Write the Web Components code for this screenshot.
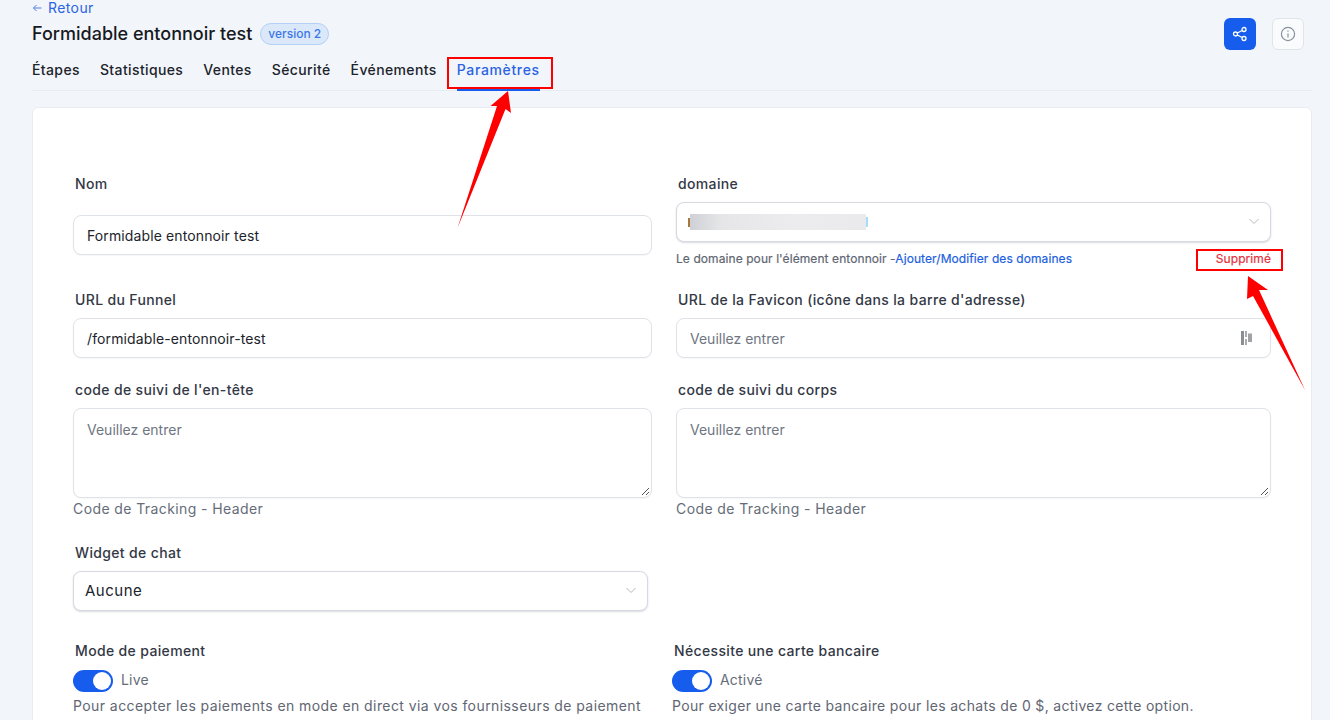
<!DOCTYPE html>
<html lang="fr">
<head>
<meta charset="utf-8">
<title>Paramètres</title>
<style>
  html, body { margin: 0; height: 720px; overflow: hidden; background: #f2f6fa; }
  body { font-family: Inter, "Liberation Sans", sans-serif; color: #1c1f26; }
</style>
</head>
<body>
<funnel-page>
  <funnel-header slot="header" title="Formidable entonnoir test" version="version 2"></funnel-header>
  <funnel-tabs slot="header" items="Étapes|Statistiques|Ventes|Sécurité|Événements|Paramètres" active="Paramètres"></funnel-tabs>
  <settings-card slot="body">
    <form-row height="116">
      <form-field label="Nom" gap="19"><text-box value="Formidable entonnoir test"></text-box></form-field>
      <form-field label="domaine">
        <select-box blurred></select-box>
        <div style="display:flex;justify-content:space-between;padding:8px 0 0 0;font:400 12px/17px Inter,sans-serif;letter-spacing:.08px;color:#5f6673;-webkit-text-stroke:.2px">
          <span>Le domaine pour l'élément entonnoir -<span style="color:#1d5fe0">Ajouter/Modifier des domaines</span></span>
          <span style="color:#e5313a">Supprimé</span>
        </div>
      </form-field>
    </form-row>
    <form-row height="90">
      <form-field label="URL du Funnel"><text-box value="/formidable-entonnoir-test"></text-box></form-field>
      <form-field label="URL de la Favicon (icône dans la barre d'adresse)"><text-box placeholder="Veuillez entrer" picker></text-box></form-field>
    </form-row>
    <form-row height="163">
      <form-field label="code de suivi de l'en-tête" hint="Code de Tracking - Header"><text-box placeholder="Veuillez entrer" multiline></text-box></form-field>
      <form-field label="code de suivi du corps" hint="Code de Tracking - Header"><text-box placeholder="Veuillez entrer" multiline></text-box></form-field>
    </form-row>
    <form-row height="98">
      <form-field label="Widget de chat" style="padding-right:4px"><select-box value="Aucune"></select-box></form-field>
      <div></div>
    </form-row>
    <form-row height="81">
      <form-field label="Mode de paiement" gap="7">
        <toggle-switch text="Live"></toggle-switch>
        <div style="margin-top:4px;font:400 14px/20px Inter,sans-serif;letter-spacing:.42px;color:#5f6673;white-space:nowrap">Pour accepter les paiements en mode en direct via vos fournisseurs de paiement</div>
      </form-field>
      <form-field label="Nécessite une carte bancaire" gap="7" style="margin-left:-4px">
        <toggle-switch text="Activé"></toggle-switch>
        <div style="margin-top:4px;font:400 14px/20px Inter,sans-serif;letter-spacing:.33px;color:#5f6673;white-space:nowrap">Pour exiger une carte bancaire pour les achats de 0 $, activez cette option.</div>
      </form-field>
    </form-row>
  </settings-card>
</funnel-page>
<red-marks></red-marks>

<script>
// small helper, every element gets an open root with its own style
function shadow(host, html) {
  host.attachShadow({ mode: 'open' }).innerHTML = html;
}

customElements.define('funnel-page', class extends HTMLElement {
  connectedCallback() {
    shadow(this, `<style>
      :host { display: block; padding: 0 18px 0 32px; height: 720px; overflow: hidden; box-sizing: border-box; }
      .body { margin-top: 16px; }
    </style>
    <slot name="header"></slot>
    <div class="body"><slot name="body"></slot></div>`);
  }
});

customElements.define('funnel-header', class extends HTMLElement {
  connectedCallback() {
    shadow(this, `<style>
      :host { display: block; padding-right: 8px; }
      .back { display: flex; align-items: center; gap: 6px; height: 16px; font-size: 14px; line-height: 16px; letter-spacing: .4px; color: #2b63e3; }
      .row { display: flex; align-items: center; height: 34px; margin-top: 1px; }
      h1 { margin: 0; font-size: 18px; line-height: 24px; font-weight: 500; color: #17191f; }
      .pill { margin-left: 8px; height: 20px; padding: 0 7px; border: 1px solid #b3d0f5; border-radius: 11px; background: #dbe8fa; color: #3b78e7; font-size: 12px; line-height: 20px; font-weight: 500; }
      .actions { margin-left: auto; display: flex; gap: 16px; }
      .btn { width: 32px; height: 32px; border-radius: 6px; box-sizing: border-box; display: flex; align-items: center; justify-content: center; }
      .share { background: #165dee; }
      .info { background: #f9fbfd; border: 1px solid #e1e5ea; }
    </style>
    <div class="back"><svg width="10" height="10" viewBox="0 0 10 10" fill="none" stroke="#4c7fe6" stroke-width="1"><path d="M9.5 5H1.5M4.5 2 1.5 5l3 3"/></svg>Retour</div>
    <div class="row">
      <h1>${this.getAttribute('title')}</h1>
      <span class="pill">${this.getAttribute('version')}</span>
      <div class="actions">
        <div class="btn share"><svg width="16" height="16" viewBox="0 0 16 16" fill="none" stroke="#fff" stroke-width="1.3"><circle cx="12" cy="3.5" r="2"/><circle cx="12" cy="12.5" r="2"/><circle cx="3.5" cy="8" r="2"/><path d="M5.3 7 10.2 4.5M5.3 9l4.9 2.5"/></svg></div>
        <div class="btn info"><svg width="16" height="16" viewBox="0 0 16 16" fill="none" stroke="#8a919c" stroke-width="1.2"><circle cx="8" cy="8" r="6.6"/><path d="M8 7.4V11.4M8 4.6V5.8"/></svg></div>
      </div>
    </div>`);
  }
});

customElements.define('funnel-tabs', class extends HTMLElement {
  connectedCallback() {
    const active = this.getAttribute('active');
    const tabs = this.getAttribute('items').split('|').map(t =>
      `<span class="tab${t === active ? ' on' : ''}">${t}</span>`).join('');
    shadow(this, `<style>
      :host { display: block; margin-top: 2px; border-bottom: 1px solid #e8ecf1; }
      .tabs { display: flex; gap: 20px; height: 37px; }
      .tab { font-size: 14px; font-weight: 500; line-height: 20px; padding-top: 7px; color: #20232b; box-sizing: border-box; letter-spacing: .38px; }
      .on { color: #2b63e3; border-bottom: 2px solid #165dee; margin-bottom: -1px; height: 38px; letter-spacing: .65px; }
    </style><div class="tabs">${tabs}</div>`);
  }
});

customElements.define('settings-card', class extends HTMLElement {
  connectedCallback() {
    shadow(this, `<style>
      :host { display: block; height: 700px; box-sizing: border-box; padding: 64px 40px 0; background: #fff; border: 1px solid #e8ecf1; border-radius: 6px; }
    </style><slot></slot>`);
  }
});

customElements.define('form-row', class extends HTMLElement {
  connectedCallback() {
    shadow(this, `<style>
      :host { display: grid; grid-template-columns: 579px 595px; column-gap: 24px; align-items: start; height: ${this.getAttribute('height')}px; }
    </style><slot></slot>`);
  }
});

customElements.define('form-field', class extends HTMLElement {
  connectedCallback() {
    const hint = this.getAttribute('hint');
    shadow(this, `<style>
      :host { display: block; }
      label { display: block; height: 24px; padding-left: 2px; margin-bottom: ${this.getAttribute('gap') || 6}px; font-size: 14px; line-height: 24px; font-weight: 500; letter-spacing: .35px; color: #333845; white-space: nowrap; }
      .hint { font-size: 14px; line-height: 22px; letter-spacing: .4px; color: #656c78; }
    </style>
    <label>${this.getAttribute('label')}</label>
    <slot></slot>
    ${hint ? `<div class="hint">${hint}</div>` : ''}`);
  }
});

customElements.define('text-box', class extends HTMLElement {
  connectedCallback() {
    const value = this.getAttribute('value');
    const multi = this.hasAttribute('multiline');
    const text = value || this.getAttribute('placeholder');
    shadow(this, `<style>
      :host { display: block; }
      .box { position: relative; box-sizing: border-box; height: ${multi ? 90 : 40}px; padding: ${multi ? 11 : 10}px 13px; border: 1px solid #dfe2e8; border-radius: 8px; background: #fff; font-size: 14px; line-height: 20px; letter-spacing: ${value ? '.12px' : '0'}; color: ${value ? '#20232b' : '#6f7682'}; box-shadow: 0 1px 1px rgba(30,40,60,.04); }
      svg { position: absolute; }
      .pick { right: 17px; top: 12px; }
      .grip { right: 1px; bottom: 1px; }
    </style>
    <div class="box">${text}
      ${this.hasAttribute('picker') ? '<svg class="pick" width="14" height="14" viewBox="0 0 14 14"><rect x="2" y="0" width="3" height="14" fill="#8b8e93"/><rect x="6" y="0" width="2" height="6" fill="#a9abaf"/><rect x="6" y="8" width="2" height="6" fill="#a9abaf"/><rect x="9" y="2.5" width="4" height="8.5" fill="#a0a2a6"/></svg>' : ''}
      ${multi ? '<svg class="grip" width="9" height="9" viewBox="0 0 9 9" stroke="#555" fill="none"><path d="M8 1 1 8M8 5 5 8"/></svg>' : ''}
    </div>`);
  }
});

customElements.define('select-box', class extends HTMLElement {
  connectedCallback() {
    shadow(this, `<style>
      :host { display: block; }
      .box { position: relative; box-sizing: border-box; height: 40px; padding: 9px 11px; border: 1px solid #d6d8e2; border-radius: 8px; background: #fff; font-size: 15px; line-height: 20px; letter-spacing: .5px; color: #20232b; box-shadow: 0 1px 2px rgba(30,40,70,.16); }
      svg { position: absolute; right: 11px; top: 15px; }
      .blur { position: absolute; left: 13px; top: 11px; width: 176px; height: 16px; background: linear-gradient(90deg, #cfd1d6, #e6e6e8 18%, #ececee 60%, #eaeaec); }
      .blur::before { content: ""; position: absolute; left: -2px; top: 4px; width: 2px; height: 9px; background: #a8763f; }
      .blur::after { content: ""; position: absolute; right: -2px; top: 3px; width: 2px; height: 10px; background: #a5dcf7; }
    </style>
    <div class="box">${this.getAttribute('value') || ''}
      ${this.hasAttribute('blurred') ? '<div class="blur"></div>' : ''}
      <svg width="10" height="7" viewBox="0 0 10 7" fill="none" stroke="#b4b8c0"><path d="M.5 1 5 5.5 9.5 1"/></svg>
    </div>`);
  }
});

customElements.define('toggle-switch', class extends HTMLElement {
  connectedCallback() {
    shadow(this, `<style>
      :host { display: flex; align-items: center; gap: 8px; height: 22px; font-size: 14px; letter-spacing: .2px; color: #656c78; }
      .track { position: relative; width: 40px; height: 22px; border-radius: 11px; background: #165dee; }
      .knob { position: absolute; right: 2px; top: 2px; width: 18px; height: 18px; border-radius: 50%; background: #fff; }
      .txt { margin-top: -4px; }
    </style>
    <span class="track"><span class="knob"></span></span><span class="txt">${this.getAttribute('text')}</span>`);
  }
});

// the red boxes and arrows painted over the screenshot
customElements.define('red-marks', class extends HTMLElement {
  connectedCallback() {
    shadow(this, `<style>
      :host { position: absolute; left: 0; top: 0; width: 1330px; height: 720px; pointer-events: none; }
    </style>
    <svg width="1330" height="720" viewBox="0 0 1330 720">
      <rect x="448" y="58" width="104" height="30" fill="none" stroke="#f00" stroke-width="2"/>
      <rect x="1197" y="250" width="85" height="20" fill="none" stroke="#f00" stroke-width="2"/>
      <polygon fill="#f00" points="508,91 511,113 505.5,109 457.5,228 497,106 490.5,106"/>
      <polygon fill="#f00" points="1248,276 1268,290 1259,290 1305,390 1253,296 1247,299"/>
    </svg>`);
  }
});
</script>
</body>
</html>
